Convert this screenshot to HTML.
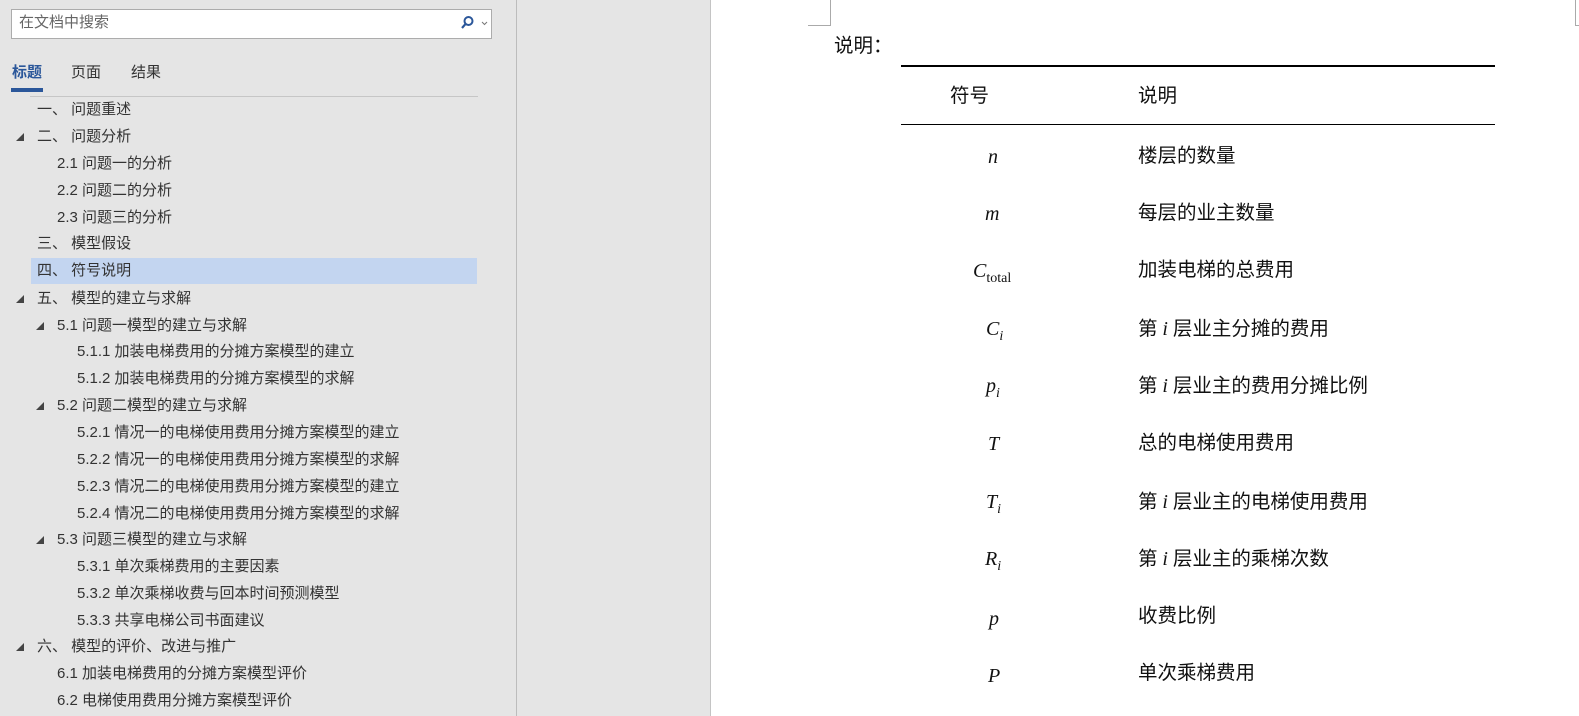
<!DOCTYPE html>
<html><head><meta charset="utf-8"><style>
*{margin:0;padding:0;box-sizing:border-box}
body{width:1579px;height:716px;overflow:hidden;background:#e5e5e5;position:relative;font-family:"Liberation Sans","Microsoft YaHei","Noto Sans CJK SC",sans-serif}
.a{position:absolute;white-space:nowrap}
.nav{font-size:15px;color:#333;line-height:27px;height:27px}
.tri{position:absolute;width:0;height:0;border-left:8px solid transparent;border-bottom:8px solid #444}
.pg{position:absolute;left:710px;top:0;width:869px;height:716px;background:#fff;border-left:1px solid #c4c4c4}
.doc{font-family:"Liberation Serif","Noto Sans CJK SC",serif;font-size:19.5px;color:#111;line-height:24px}
.m{font-family:"Liberation Serif",serif;font-style:italic;font-size:20px}
sub{font-size:14px;vertical-align:-5px}
</style></head><body>
<div class="a" style="left:11px;top:9px;width:481px;height:30px;background:#fff;border:1px solid #acacac"></div>
<div class="a" style="left:19px;top:13px;font-size:15px;color:#666;line-height:20px">在文档中搜索</div>
<svg class="a" style="left:460px;top:15px" width="30" height="16" viewBox="0 0 30 16"><circle cx="8.5" cy="6" r="4" fill="none" stroke="#2b579a" stroke-width="2"/><line x1="5.5" y1="9" x2="2" y2="13" stroke="#2b579a" stroke-width="2.2"/><polyline points="22,7 24.5,9.5 27,7" fill="none" stroke="#777" stroke-width="1"/></svg>
<div class="a" style="left:12px;top:61px;font-size:15px;color:#2b579a;font-weight:bold">标题</div>
<div class="a" style="left:71px;top:61px;font-size:15px;color:#333">页面</div>
<div class="a" style="left:131px;top:61px;font-size:15px;color:#333">结果</div>
<div class="a" style="left:11px;top:88px;width:32px;height:4px;background:#2b579a"></div>
<div class="a" style="left:30px;top:96px;width:448px;height:1px;background:#c6c6c6"></div>
<div class="a" style="left:31px;top:258px;width:446px;height:26px;background:#c3d5f0"></div>
<div class="a" style="left:516px;top:0;width:1px;height:716px;background:#bcbcbc"></div>

<div class="a nav" style="left:37px;top:96px">一、 问题重述</div>
<div class="tri" style="left:16px;top:133px"></div><div class="a nav" style="left:37px;top:123px">二、 问题分析</div>
<div class="a nav" style="left:57px;top:150px">2.1 问题一的分析</div>
<div class="a nav" style="left:57px;top:177px">2.2 问题二的分析</div>
<div class="a nav" style="left:57px;top:204px">2.3 问题三的分析</div>
<div class="a nav" style="left:37px;top:230px">三、 模型假设</div>
<div class="a nav" style="left:37px;top:257px">四、 符号说明</div>
<div class="tri" style="left:16px;top:295px"></div><div class="a nav" style="left:37px;top:285px">五、 模型的建立与求解</div>
<div class="tri" style="left:36px;top:322px"></div><div class="a nav" style="left:57px;top:312px">5.1 问题一模型的建立与求解</div>
<div class="a nav" style="left:77px;top:338px">5.1.1 加装电梯费用的分摊方案模型的建立</div>
<div class="a nav" style="left:77px;top:365px">5.1.2 加装电梯费用的分摊方案模型的求解</div>
<div class="tri" style="left:36px;top:402px"></div><div class="a nav" style="left:57px;top:392px">5.2 问题二模型的建立与求解</div>
<div class="a nav" style="left:77px;top:419px">5.2.1 情况一的电梯使用费用分摊方案模型的建立</div>
<div class="a nav" style="left:77px;top:446px">5.2.2 情况一的电梯使用费用分摊方案模型的求解</div>
<div class="a nav" style="left:77px;top:473px">5.2.3 情况二的电梯使用费用分摊方案模型的建立</div>
<div class="a nav" style="left:77px;top:500px">5.2.4 情况二的电梯使用费用分摊方案模型的求解</div>
<div class="tri" style="left:36px;top:536px"></div><div class="a nav" style="left:57px;top:526px">5.3 问题三模型的建立与求解</div>
<div class="a nav" style="left:77px;top:553px">5.3.1 单次乘梯费用的主要因素</div>
<div class="a nav" style="left:77px;top:580px">5.3.2 单次乘梯收费与回本时间预测模型</div>
<div class="a nav" style="left:77px;top:607px">5.3.3 共享电梯公司书面建议</div>
<div class="tri" style="left:16px;top:643px"></div><div class="a nav" style="left:37px;top:633px">六、 模型的评价、改进与推广</div>
<div class="a nav" style="left:57px;top:660px">6.1 加装电梯费用的分摊方案模型评价</div>
<div class="a nav" style="left:57px;top:687px">6.2 电梯使用费用分摊方案模型评价</div>

<div class="pg"></div>
<div class="a" style="left:830px;top:0;width:1px;height:25px;background:#aaa"></div>
<div class="a" style="left:808px;top:25px;width:23px;height:1px;background:#aaa"></div>
<div class="a" style="left:1575px;top:0;width:1px;height:25px;background:#aaa"></div>
<div class="a" style="left:1575px;top:25px;width:4px;height:1px;background:#aaa"></div>

<div class="a doc" style="left:834px;top:35px">说明：</div>
<div class="a" style="left:901px;top:65px;width:594px;height:2px;background:#000"></div>
<div class="a" style="left:901px;top:124px;width:594px;height:1px;background:#000"></div>
<div class="a doc" style="left:950px;top:85px">符号</div>
<div class="a doc" style="left:1138px;top:85px">说明</div>

<div class="a doc m" style="left:988px;top:145px">n</div><div class="a doc" style="left:1138px;top:145px">楼层的数量</div>
<div class="a doc m" style="left:985px;top:202px">m</div><div class="a doc" style="left:1138px;top:202px">每层的业主数量</div>
<div class="a doc" style="left:973px;top:259px"><i class="m">C</i><sub>total</sub></div><div class="a doc" style="left:1138px;top:259px">加装电梯的总费用</div>
<div class="a doc" style="left:986px;top:317px"><i class="m">C</i><sub><i>i</i></sub></div><div class="a doc" style="left:1138px;top:317px">第 <i class="m">i</i> 层业主分摊的费用</div>
<div class="a doc" style="left:986px;top:374px"><i class="m">p</i><sub><i>i</i></sub></div><div class="a doc" style="left:1138px;top:374px">第 <i class="m">i</i> 层业主的费用分摊比例</div>
<div class="a doc m" style="left:988px;top:432px">T</div><div class="a doc" style="left:1138px;top:432px">总的电梯使用费用</div>
<div class="a doc" style="left:986px;top:490px"><i class="m">T</i><sub><i>i</i></sub></div><div class="a doc" style="left:1138px;top:490px">第 <i class="m">i</i> 层业主的电梯使用费用</div>
<div class="a doc" style="left:985px;top:547px"><i class="m">R</i><sub><i>i</i></sub></div><div class="a doc" style="left:1138px;top:547px">第 <i class="m">i</i> 层业主的乘梯次数</div>
<div class="a doc m" style="left:989px;top:607px">p</div><div class="a doc" style="left:1138px;top:605px">收费比例</div>
<div class="a doc m" style="left:988px;top:664px">P</div><div class="a doc" style="left:1138px;top:662px">单次乘梯费用</div>
</body></html>
